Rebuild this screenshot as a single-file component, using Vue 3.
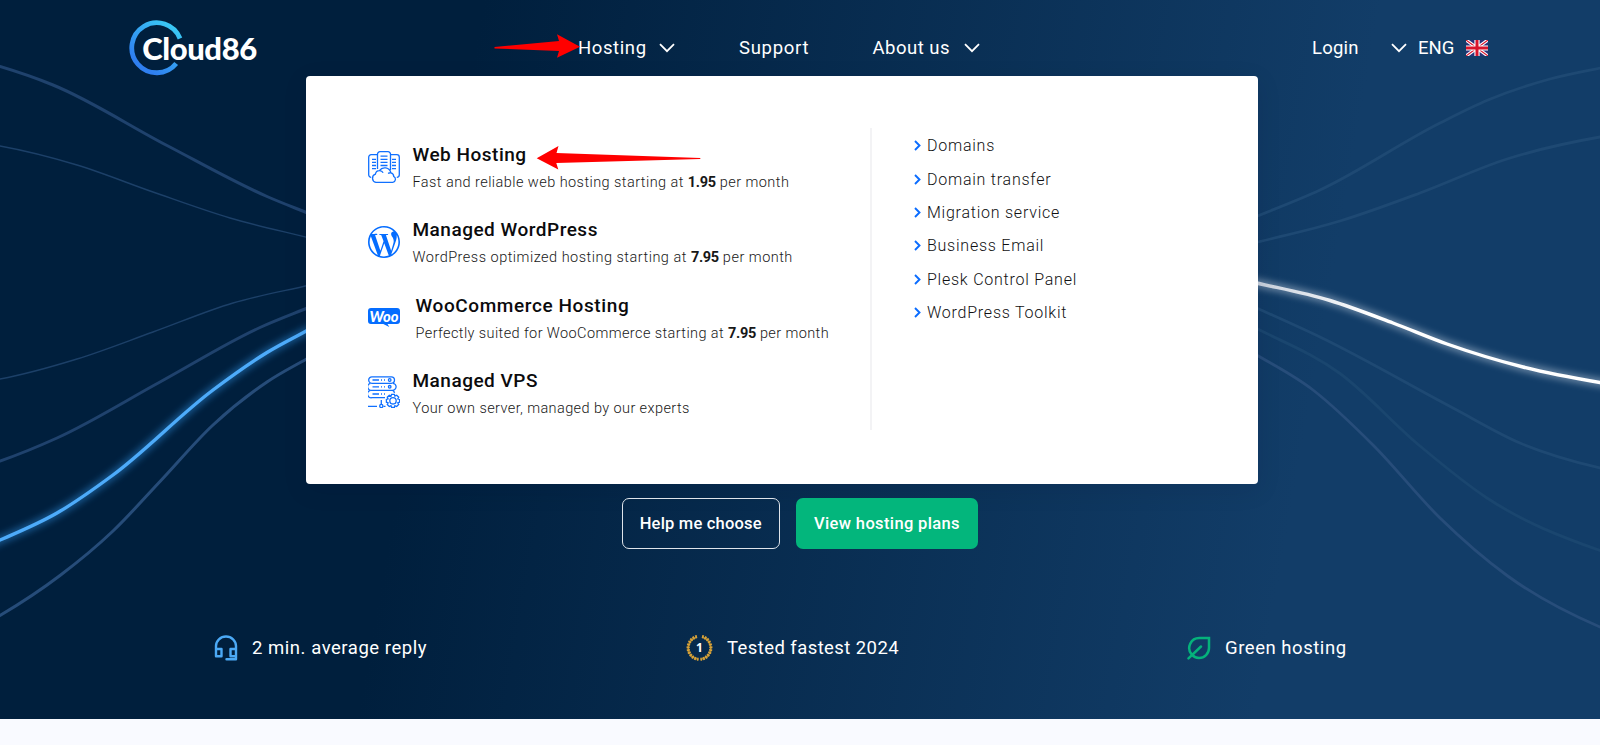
<script setup>
const hostingItems = [
  { icon: 'servers', title: 'Web Hosting', before: 'Fast and reliable web hosting starting at', price: '1.95', after: 'per month' },
  { icon: 'wordpress', title: 'Managed WordPress', before: 'WordPress optimized hosting starting at', price: '7.95', after: 'per month' },
  { icon: 'woo', title: 'WooCommerce Hosting', before: 'Perfectly suited for WooCommerce starting at', price: '7.95', after: 'per month' },
  { icon: 'vps', title: 'Managed VPS', before: 'Your own server, managed by our experts' }
];

const links = [
  'Domains',
  'Domain transfer',
  'Migration service',
  'Business Email',
  'Plesk Control Panel',
  'WordPress Toolkit'
];

// Points of the background waves
const waves = [
  { type: 'thick', points: [[-40, 56], [0, 66.5], [53, 85], [167, 145.5], [267, 196.5], [310, 214]] },
  { type: 'thin', points: [[-40, 140], [0, 146], [77, 165], [153, 192], [230, 218], [310, 238]] },
  { type: 'thin', points: [[-40, 385], [0, 379], [77, 359], [153, 332], [233, 303], [310, 285]] },
  { type: 'thick', points: [[-40, 473], [0, 461], [57, 438], [160, 382], [260, 327.5], [310, 307]] },
  { type: 'blue', points: [[-50, 560], [0, 540], [57, 513], [113, 475], [213, 390], [267, 352.5], [312, 328]] },
  { type: 'bright', points: [[-50, 642], [0, 615.5], [60, 575.5], [113, 531], [160, 481.5], [213, 425], [267, 382], [310, 357]] },
  { type: 'faint', points: [[1250, 219], [1320, 190], [1440, 123], [1488, 100], [1550, 79], [1610, 66]] },
  { type: 'faint', points: [[1250, 244], [1340, 221], [1420, 193], [1507, 159], [1600, 137], [1640, 131]] },
  { type: 'white', points: [[1250, 281.5], [1330, 300.5], [1393, 323], [1447, 344], [1523, 367], [1600, 382.5], [1650, 390]] },
  { type: 'faint', points: [[1250, 305], [1320, 337], [1453, 408], [1520, 443], [1600, 468], [1640, 476]] },
  { type: 'fainter', points: [[1250, 325], [1340, 373.5], [1420, 446], [1487, 498], [1600, 550.5], [1640, 563]] },
  { type: 'soft', points: [[1250, 351], [1313, 390], [1373, 445], [1440, 518], [1507, 575.5], [1600, 627], [1640, 642]] }
];

// Slope at each point, weighted by the width of the neighbouring spans
function slopeAt(p, i) {
  const slope = (a, b) => (b[1] - a[1]) / (b[0] - a[0]);
  if (i === 0) return slope(p[0], p[1]);
  if (i === p.length - 1) return slope(p[i - 1], p[i]);
  const h0 = p[i][0] - p[i - 1][0];
  const h1 = p[i + 1][0] - p[i][0];
  return (slope(p[i - 1], p[i]) * h1 + slope(p[i], p[i + 1]) * h0) / (h0 + h1);
}

function wavePath(p) {
  let d = `M${p[0][0]} ${p[0][1]}`;
  for (let i = 0; i < p.length - 1; i++) {
    const [x0, y0] = p[i];
    const [x1, y1] = p[i + 1];
    const h = (x1 - x0) / 3;
    d += `C${x0 + h} ${y0 + h * slopeAt(p, i)} ${x1 - h} ${y1 - h * slopeAt(p, i + 1)} ${x1} ${y1}`;
  }
  return d;
}
</script>

<template>
  <div class="page">
    <section class="hero">
      <svg class="waves" viewBox="0 0 1600 719" aria-hidden="true">
        <defs>
          <filter id="glow" x="-10%" y="-20%" width="120%" height="140%">
            <feGaussianBlur stdDeviation="3.5" />
          </filter>
          <linearGradient id="whiteFade" gradientUnits="userSpaceOnUse" x1="1250" y1="0" x2="1370" y2="0">
            <stop offset="0" stop-color="#c3ccd9" />
            <stop offset="1" stop-color="#fff" />
          </linearGradient>
        </defs>
        <template v-for="(wave, index) in waves" :key="index">
          <path
            v-if="wave.type === 'blue' || wave.type === 'white'"
            :class="['glow', wave.type]"
            :d="wavePath(wave.points)"
            filter="url(#glow)"
          />
          <path :class="['wave', wave.type]" :d="wavePath(wave.points)" />
        </template>
      </svg>

      <header class="header">
        <svg class="logo" viewBox="0 0 132 60" aria-label="Cloud86">
          <defs>
            <linearGradient id="ring" x1="0.9" y1="0.1" x2="0.3" y2="0.9">
              <stop offset="0" stop-color="#3ac8f5" />
              <stop offset="1" stop-color="#2f7ff0" />
            </linearGradient>
          </defs>
          <path d="M52 20.500A25 25 0 1 0 48.200 45.500" fill="none" stroke="url(#ring)" stroke-width="4.8" />
          <text x="14.200" y="41.500" class="logo-text" textLength="115">Cloud86</text>
        </svg>

        <nav class="nav">
          <a class="nav-item hosting">
            Hosting
            <svg class="chevron" viewBox="0 0 16 10"><path d="M1 1.2l7 7 7-7" /></svg>
          </a>
          <a class="nav-item support">Support</a>
          <a class="nav-item about">
            About us
            <svg class="chevron" viewBox="0 0 16 10"><path d="M1 1.2l7 7 7-7" /></svg>
          </a>
        </nav>

        <div class="account">
          <a class="login">Login</a>
          <svg class="chevron" viewBox="0 0 16 10"><path d="M1 1.2l7 7 7-7" /></svg>
          <span class="lang">ENG</span>
          <svg class="flag" viewBox="0 0 22 16">
            <rect width="22" height="16" fill="#29337a" />
            <path d="M0 0l22 16M22 0L0 16" stroke="#fff" stroke-width="3.4" />
            <path d="M0 0l22 16M22 0L0 16" stroke="#d8142c" stroke-width="1.1" />
            <path d="M11 0v16M0 8h22" stroke="#fff" stroke-width="5.2" />
            <path d="M11 0v16M0 8h22" stroke="#d8142c" stroke-width="3" />
          </svg>
        </div>
      </header>

      <div class="mega-menu">
        <ul class="products">
          <li v-for="item in hostingItems" :key="item.icon" :class="['product', item.icon]">
            <svg v-if="item.icon === 'servers'" class="product-icon line" viewBox="0 0 32 32">
              <path d="M9.5 18V3.2A2.500 2.500 0 0 1 12 .7h8a2.500 2.500 0 0 1 2.500 2.500V19" />
              <path d="M9.5 3.7H3.2A2.5 2.5 0 0 0 .7 6.2v17.600a2.500 2.500 0 0 0 2.500 2.500M22.500 3.700h6.300a2.500 2.500 0 0 1 2.500 2.500v17.600a2.500 2.500 0 0 1-2.500 2.500" />
              <path d="M12.500 5.200h7M12.500 8.300h7M12.500 11.300h7M12.500 14.500h7M4 8.300h4M4 11.300h4M4 14.500h4M4 17.700h4M24 8.300h4M24 11.300h4M24 14.500h4M24 17.700h4" />
              <path d="M7.900 31.300a4.200 4.200 0 0 1-.5-8.100 4.200 4.200 0 0 1 4-3.600 6.400 6.400 0 0 1 11.500 2.200 3.700 3.700 0 0 1 2.800 3.500 3.200 3.200 0 0 1-.9 6zM11.500 19.600c1.800 0 3 .8 3.600 2.200M22.900 21.800c-1.100-.2-2 0-2.800.6" />
            </svg>
            <svg v-else-if="item.icon === 'wordpress'" class="product-icon solid" viewBox="0 0 24 24">
              <path d="M21.469 6.825c.84 1.537 1.318 3.3 1.318 5.175 0 3.979-2.156 7.456-5.363 9.325l3.295-9.527c.615-1.54.82-2.771.82-3.864 0-.405-.026-.78-.07-1.11m-7.981.105c.647-.03 1.232-.105 1.232-.105.582-.075.514-.93-.067-.899 0 0-1.755.135-2.88.135-1.064 0-2.85-.15-2.85-.15-.585-.03-.661.855-.075.885 0 0 .54.061 1.125.09l1.68 4.605-2.37 7.08L5.354 6.9c.649-.03 1.234-.1 1.234-.1.585-.075.516-.93-.065-.896 0 0-1.746.138-2.874.138-.2 0-.438-.008-.69-.015C4.911 3.15 8.235 1.215 12 1.215c2.809 0 5.365 1.072 7.286 2.833-.046-.003-.091-.009-.141-.009-1.06 0-1.812.923-1.812 1.914 0 .89.513 1.643 1.06 2.531.411.72.89 1.643.89 2.977 0 .915-.354 1.994-.821 3.479l-1.075 3.585-3.9-11.61.001.014zM12 22.784c-1.059 0-2.081-.153-3.048-.437l3.237-9.406 3.315 9.087c.024.053.05.101.078.149-1.12.393-2.325.609-3.582.609M1.211 12c0-1.564.336-3.05.935-4.39L7.29 21.709C3.694 19.96 1.212 16.271 1.211 12M12 0C5.385 0 0 5.385 0 12s5.385 12 12 12 12-5.385 12-12S18.615 0 12 0" />
            </svg>
            <svg v-else-if="item.icon === 'woo'" class="product-icon solid" viewBox="0 0 32 32">
              <path d="M3 7h26a3 3 0 0 1 3 3v10a3 3 0 0 1-3 3h-9.500l1.800 3-6-3H3a3 3 0 0 1-3-3V10a3 3 0 0 1 3-3z" />
              <text x="1.500" y="20.700" class="woo-text" textLength="29" lengthAdjust="spacingAndGlyphs">Woo</text>
            </svg>
            <svg v-else class="product-icon line" viewBox="0 0 32 32">
              <rect x=".7" y=".8" width="25.800" height="6.500" rx="3.200" />
              <path d="M2.500 7.300A3.500 3.500 0 0 0 3.800 14.300h20.300a3.500 3.500 0 0 0 .9-7" />
              <path d="M2.500 14.300A3.700 3.700 0 0 0 3.900 21.700H17M24.700 14.300c1 .5 1.600 1.400 1.800 2.600" />
              <path d="M4.500 4h6.500M4.500 10.800h6.500M4.500 18h6.500" />
              <path d="M13 4h1M16 4h1M13 10.800h1M16 10.800h1M13 18h1M16 18h1" />
              <circle cx="21.700" cy="4" r="1.300" />
              <circle cx="21.700" cy="10.800" r="1.300" />
              <path d="M0 30.300h9M15.500 30.300h2M13.300 24v4" />
              <circle cx="13.300" cy="30" r="1.600" />
              <circle cx="25" cy="24.800" r="3.200" />
              <path d="M23.600 18.300h2.800l.5 1.700 1.800-.8 2 2-.9 1.700 1.800.6v2.700l-1.800.6.9 1.700-2 2-1.800-.9-.5 1.800h-2.800l-.6-1.800-1.700.9-2-2 .8-1.700-1.700-.6v-2.700l1.700-.6-.8-1.700 2-2 1.700.8z" />
            </svg>
            <div class="product-info">
              <h3 class="product-title">{{ item.title }}</h3>
              <p class="product-text">{{ item.before }} <template v-if="item.price"><b>{{ item.price }}</b> {{ item.after }}</template></p>
            </div>
          </li>
        </ul>
        <ul class="links">
          <li v-for="link in links" :key="link" class="link">
            <svg class="link-arrow" viewBox="0 0 7 11"><path d="M1 1l4.500 4.500L1 10" /></svg>
            <span>{{ link }}</span>
          </li>
        </ul>
      </div>

      <div class="actions">
        <button class="btn outline">Help me choose</button>
        <button class="btn green">View hosting plans</button>
      </div>

      <div class="features">
        <div class="feature reply">
          <svg class="feature-icon" viewBox="0 0 24 26">
            <path d="M2 15V11a10 9.500 0 0 1 20 0v13.200H12.500M2 14v7.200h5.500V14zM22 14v7.200h-5.500V14z" fill="none" stroke="#4ba9f5" stroke-width="2.400" stroke-linejoin="round" stroke-linecap="round" />
          </svg>
          <span>2 min. average reply</span>
        </div>
        <div class="feature tested">
          <svg class="feature-icon" viewBox="0 0 26 26">
            <path d="M10 2.200A11.200 11.200 0 0 0 12 24.200M16 2.200A11.200 11.200 0 0 1 14 24.200" fill="none" stroke="#b98d32" stroke-width="1.600" />
            <path d="M10.500 1.500A11.600 11.600 0 0 0 12 24.300M15.500 1.500A11.600 11.600 0 0 1 14 24.300" fill="none" stroke="#d6a23a" stroke-width="3.200" stroke-dasharray="1.800 1" />
            <text x="13" y="17" class="rank">1</text>
          </svg>
          <span>Tested fastest 2024</span>
        </div>
        <div class="feature green-host">
          <svg class="feature-icon" viewBox="0 0 24 24">
            <path d="M22 2H12.500A10 10 0 0 0 4.600 18.400 10.500 10.500 0 0 0 12 22 10 10 0 0 0 22 12zM1.500 22.300L14 10.500" fill="none" stroke="#05b27b" stroke-width="2.500" stroke-linecap="round" />
          </svg>
          <span>Green hosting</span>
        </div>
      </div>

      <!-- Pointers over the menu -->
      <svg class="pointers" viewBox="0 0 1600 719" aria-hidden="true">
        <path d="M494.500 47L559 41l-2-6.700 23 12.400-23 11 2-6.700-64.500-2.600z" />
        <path d="M536.700 158.300L558.500 146l-2 7 143.800 5v1L556.300 163l2 6.500z" />
      </svg>
    </section>
  </div>
</template>

<style>
body {
  background: #f9faff;
}
</style>

<style scoped>
.page {
  height: 745px;
  overflow: hidden;
  font-family: Roboto, "Liberation Sans", sans-serif;
  background: #f9faff;
}

.hero {
  position: relative;
  height: 719px;
  background: linear-gradient(100deg, #001f3d 28%, #123d68 80%);
}

.waves,
.pointers {
  position: absolute;
  left: 0;
  top: 0;
  width: 1600px;
  height: 719px;
  pointer-events: none;
}

.pointers {
  fill: #f00;
  z-index: 3;
}

.wave,
.glow {
  fill: none;
}

.wave.thick { stroke: #1f426d; stroke-width: 3; }
.wave.thin { stroke: #1c4068; stroke-width: 1.4; }
.wave.bright { stroke: #264c79; stroke-width: 3; }
.wave.blue { stroke: #4dabfa; stroke-width: 3.4; }
.wave.white { stroke: url(#whiteFade); stroke-width: 3.4; }
.wave.faint { stroke: #1e4973; stroke-width: 2.8; }
.wave.fainter { stroke: #1a466f; stroke-width: 2.8; }
.wave.soft { stroke: #274d7a; stroke-width: 2.8; }
.glow.blue { stroke: #2f8fe0; stroke-width: 8; opacity: 0.5; }
.glow.white { stroke: #c4d2e2; stroke-width: 8; opacity: 0.5; }

.header {
  position: relative;
  display: flex;
  align-items: center;
  box-sizing: border-box;
  height: 76px;
  padding: 20px 0 0 128px;
  color: #fff;
  font-size: 18.5px;
}

.logo {
  width: 132px;
  height: 60px;
  flex-shrink: 0;
}

.logo-text {
  font: 900 31px Lato, sans-serif;
  fill: #fff;
}

.nav {
  display: flex;
  width: 734px;
  margin-left: 318px;
}

.nav,
.account {
  height: 56px;
  align-items: center;
}

.nav-item {
  display: flex;
  align-items: center;
  justify-content: space-between;
  letter-spacing: 0.6px;
}

.nav-item.hosting { width: 97px; }
.nav-item.support { width: 71px; margin-left: 64px; letter-spacing: 0.700px; }
.nav-item.about { width: 107px; margin-left: 62.500px; letter-spacing: 0.500px; }

.chevron {
  width: 16px;
  height: 10px;
  fill: none;
  stroke: #fff;
  stroke-width: 1.8;
}

.account {
  display: flex;
}

.login {
  width: 78.500px;
  letter-spacing: 0.200px;
}

.lang {
  width: 47.500px;
  margin-left: 11.500px;
}

.flag {
  width: 22px;
  height: 16px;
}

.mega-menu {
  position: relative;
  display: flex;
  box-sizing: border-box;
  width: 952px;
  height: 407.500px;
  margin-left: 306px;
  padding: 52px 0 53.500px 62px;
  background: #fff;
  border-radius: 4px;
  box-shadow: 0 6px 24px rgba(0, 20, 50, 0.1);
}

.products,
.links {
  margin: 0;
  padding: 0;
  list-style: none;
}

.products {
  width: 502px;
  padding-top: 13px;
  border-right: 2px solid #f3f3f5;
}

.product {
  display: flex;
  height: 75.300px;
}

.product-icon {
  width: 32px;
  height: 32px;
  margin: 9.500px 12.500px 0 0;
  flex-shrink: 0;
}

.product-icon.line {
  fill: none;
  stroke: #1070ff;
  stroke-width: 1.3;
}

.product-icon.solid {
  fill: #056dff;
}

.woo .product-icon {
  margin-right: 15.500px;
}

.woo-text {
  font: italic 900 14.500px Lato, sans-serif;
  fill: #fff;
}

.product-title {
  margin: 0;
  font-size: 19px;
  line-height: 28px;
  font-weight: 500;
  color: #0b0b0d;
  letter-spacing: 0.500px;
}

.woo .product-title {
  letter-spacing: 0.600px;
}

.product-text {
  margin: 2px 0 0;
  font-size: 14.500px;
  line-height: 24px;
  font-weight: 300;
  color: #181818;
  letter-spacing: 0.440px;
  white-space: nowrap;
}

.wordpress .product-text {
  letter-spacing: 0.490px;
}

.woo .product-text,
.vps .product-text {
  letter-spacing: 0.400px;
}

.product-text b {
  font-weight: 700;
  letter-spacing: -0.3px;
}

.links {
  padding: 1px 0 0 42px;
}

.link {
  display: flex;
  align-items: center;
  height: 33.400px;
  color: #101012;
  font-size: 16px;
  font-weight: 300;
  letter-spacing: 0.760px;
}

.link-arrow {
  width: 7px;
  height: 11px;
  margin-right: 6px;
  fill: none;
  stroke: #0a6cff;
  stroke-width: 1.9;
}

.actions {
  position: relative;
  display: flex;
  gap: 16px;
  padding: 14.500px 0 0 621.500px;
}

.btn {
  box-sizing: border-box;
  height: 51px;
  padding: 0 0 1px;
  border-radius: 7px;
  font-family: inherit;
  font-size: 16.500px;
  font-weight: 500;
  letter-spacing: 0.360px;
  color: #fff;
}

.btn.outline {
  width: 158.500px;
  border: 1.500px solid #dfe4ea;
  background: transparent;
  letter-spacing: 0.200px;
}

.btn.green {
  width: 182px;
  border: 0;
  background: #03b67c;
}

.features {
  position: relative;
  display: flex;
  padding: 84px 0 0 214px;
}

.feature {
  display: flex;
  flex-shrink: 0;
  align-items: center;
  width: 501px;
  height: 30px;
  color: #fff;
  font-size: 18.500px;
  letter-spacing: 0.540px;
}

.feature-icon {
  width: 24px;
  height: 26px;
  margin-right: 14px;
}

.feature.reply { width: 472px; }
.feature.tested { letter-spacing: 0.420px; }
.feature.green-host { width: 200px; }
.tested .feature-icon { width: 27px; margin-right: 14px; }
.green-host .feature-icon { height: 24px; }

.rank {
  font: 700 12px "Open Sans", sans-serif;
  fill: #fff;
  text-anchor: middle;
  letter-spacing: 0;
}
</style>
